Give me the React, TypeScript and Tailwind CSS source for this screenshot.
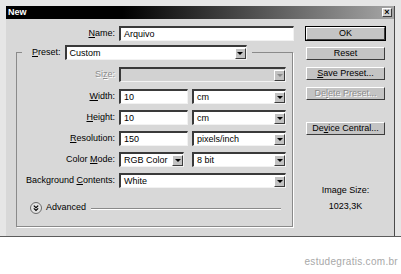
import * as React from "react";

const sunken =
    "border-t-2 border-l-2 border-b border-r border-t-[#3a3a3a] border-l-[#3a3a3a] border-b-[#f2f2f2] border-r-[#f2f2f2]";
const raised =
    "border border-t-white border-l-white border-b-[#3c3c3c] border-r-[#3c3c3c]";

function Arrow({ disabled = false }: { disabled?: boolean }) {
    return (
        <div className={`ml-auto w-[11px] h-[11px] flex items-center justify-center bg-[#c2c2c2] ${raised}`}>
            <div
                className={`w-0 h-0 border-l-[3px] border-r-[3px] border-t-[3px] border-l-transparent border-r-transparent ${disabled ? "border-t-[#8a8a8a]" : "border-t-black"}`}
            />
        </div>
    );
}

function Field({ value, width, select = false, disabled = false }: {
    value?: string;
    width: string;
    select?: boolean;
    disabled?: boolean;
}) {
    return (
        <div className={`${width} h-[15px] flex items-center ${disabled ? "bg-[#d2d2d2]" : "bg-white"} ${sunken}`}>
            <span className="pl-[3px] leading-none">{value}</span>
            {select && <Arrow disabled={disabled} />}
        </div>
    );
}

function Label({ children, width = "w-[102px]", disabled = false }: {
    children: React.ReactNode;
    width?: string;
    disabled?: boolean;
}) {
    return (
        <span
            className={`${width} shrink-0 text-right pr-[4px] ${disabled ? "text-[#8c8c8c] [text-shadow:1px_1px_0_#fff]" : ""}`}
        >
            {children}
        </span>
    );
}

function DialogButton({ children, primary = false, disabled = false, className = "" }: {
    children: React.ReactNode;
    primary?: boolean;
    disabled?: boolean;
    className?: string;
}) {
    return (
        <div
            className={`w-[79px] h-[13px] flex items-center justify-center bg-[#c4c4c4] ${raised} ${primary ? "ring-1 ring-black" : ""} ${disabled ? "text-[#8c8c8c] [text-shadow:1px_1px_0_#fff]" : ""} ${className}`}
        >
            {children}
        </div>
    );
}

export default function App() {
    return (
        <div className="w-[401px] h-[274px] bg-white text-[9px] text-black font-['Liberation_Sans',Arial,sans-serif]">
            <div className="h-[237px] bg-[#e6e6e6] pl-[6px] pr-[6px] pt-[6px] border-b border-[#5c5c5c]">
                <div className="h-[230px] flex flex-col bg-[#d8d8d8] border-r border-[#4a4a4a]">
                    {/* title bar */}
                    <div className="h-[13px] flex items-center bg-[linear-gradient(to_right,#000_30%,#a6a6a6)] pl-[2px] pr-[2px]">
                        <span className="font-bold text-white text-[9px] leading-none">New</span>
                        <div className={`ml-auto w-[10px] h-[9px] flex items-center justify-center bg-[#d0d0d0] ${raised}`}>
                            <span className="text-[9px] font-bold leading-none -mt-px">×</span>
                        </div>
                    </div>

                    <div className="flex flex-1">
                        {/* left side */}
                        <div className="w-[300px] flex flex-col">
                            <div className="mt-[7px] flex items-center">
                                <Label width="w-[113px]"><u>N</u>ame:</Label>
                                <Field value="Arquivo" width="w-[175px]" />
                            </div>

                            <fieldset className="mt-[4px] ml-[10px] w-[277px] h-[182px] border border-[#8a8a8a] shadow-[1px_1px_0_#fff]">
                                <legend className="ml-[5px] pl-[10px] pr-[5px]">
                                    <div className="flex items-center">
                                        <span className="pr-[4px]"><u>P</u>reset:</span>
                                        <Field value="Custom" width="w-[182px]" select />
                                    </div>
                                </legend>

                                <div className="flex flex-col">
                                    <div className="mt-[7px] flex items-center">
                                        <Label disabled>Si<u>z</u>e:</Label>
                                        <Field width="w-[167px]" select disabled />
                                    </div>
                                    <div className="mt-[7px] flex items-center">
                                        <Label><u>W</u>idth:</Label>
                                        <Field value="10" width="w-[69px]" />
                                        <div className="ml-[4px]"><Field value="cm" width="w-[94px]" select /></div>
                                    </div>
                                    <div className="mt-[6px] flex items-center">
                                        <Label><u>H</u>eight:</Label>
                                        <Field value="10" width="w-[69px]" />
                                        <div className="ml-[4px]"><Field value="cm" width="w-[94px]" select /></div>
                                    </div>
                                    <div className="mt-[6px] flex items-center">
                                        <Label><u>R</u>esolution:</Label>
                                        <Field value="150" width="w-[69px]" />
                                        <div className="ml-[4px]"><Field value="pixels/inch" width="w-[94px]" select /></div>
                                    </div>
                                    <div className="mt-[6px] flex items-center">
                                        <Label>Color <u>M</u>ode:</Label>
                                        <Field value="RGB Color" width="w-[65px]" select />
                                        <div className="ml-[8px]"><Field value="8 bit" width="w-[94px]" select /></div>
                                    </div>
                                    <div className="mt-[6px] flex items-center">
                                        <Label>Background <u>C</u>ontents:</Label>
                                        <Field value="White" width="w-[167px]" select />
                                    </div>

                                    <div className="mt-[14px] ml-[13px] mr-[11px] flex items-center h-[12px]">
                                        <svg width="12" height="12" viewBox="0 0 12 12">
                                            <circle cx="6" cy="6" r="5.5" fill="#e4e4e4" stroke="#6a6a6a" />
                                            <path d="M3.8 3.6 L6 5.6 L8.2 3.6 M3.8 6.4 L6 8.4 L8.2 6.4" fill="none" stroke="#000" strokeWidth="1.2" />
                                        </svg>
                                        <span className="ml-[4px]">Advanced</span>
                                        <div className="ml-[5px] flex-1 h-px bg-[#8a8a8a] shadow-[0_1px_0_#fff]" />
                                    </div>
                                </div>
                            </fieldset>
                        </div>

                        {/* right side */}
                        <div className="flex flex-col w-[79px]">
                            <DialogButton primary className="mt-[8px]">OK</DialogButton>
                            <DialogButton className="mt-[7px]">Reset</DialogButton>
                            <DialogButton className="mt-[7px]"><u>S</u>ave Preset...</DialogButton>
                            <DialogButton disabled className="mt-[7px]">De<u>l</u>ete Preset...</DialogButton>
                            <DialogButton className="mt-[22px]">De<u>v</u>ice Central...</DialogButton>
                            <div className="mt-[50px] text-center leading-[11px]">Image Size:</div>
                            <div className="mt-[5px] text-center leading-[11px]">1023,3K</div>
                        </div>
                    </div>
                </div>
            </div>
            <div className="mt-[19px] pr-[3px] text-right text-[10px] tracking-[0.3px] text-[#a8a8a8] leading-[11px]">
                estudegratis.com.br
            </div>
        </div>
    );
}
